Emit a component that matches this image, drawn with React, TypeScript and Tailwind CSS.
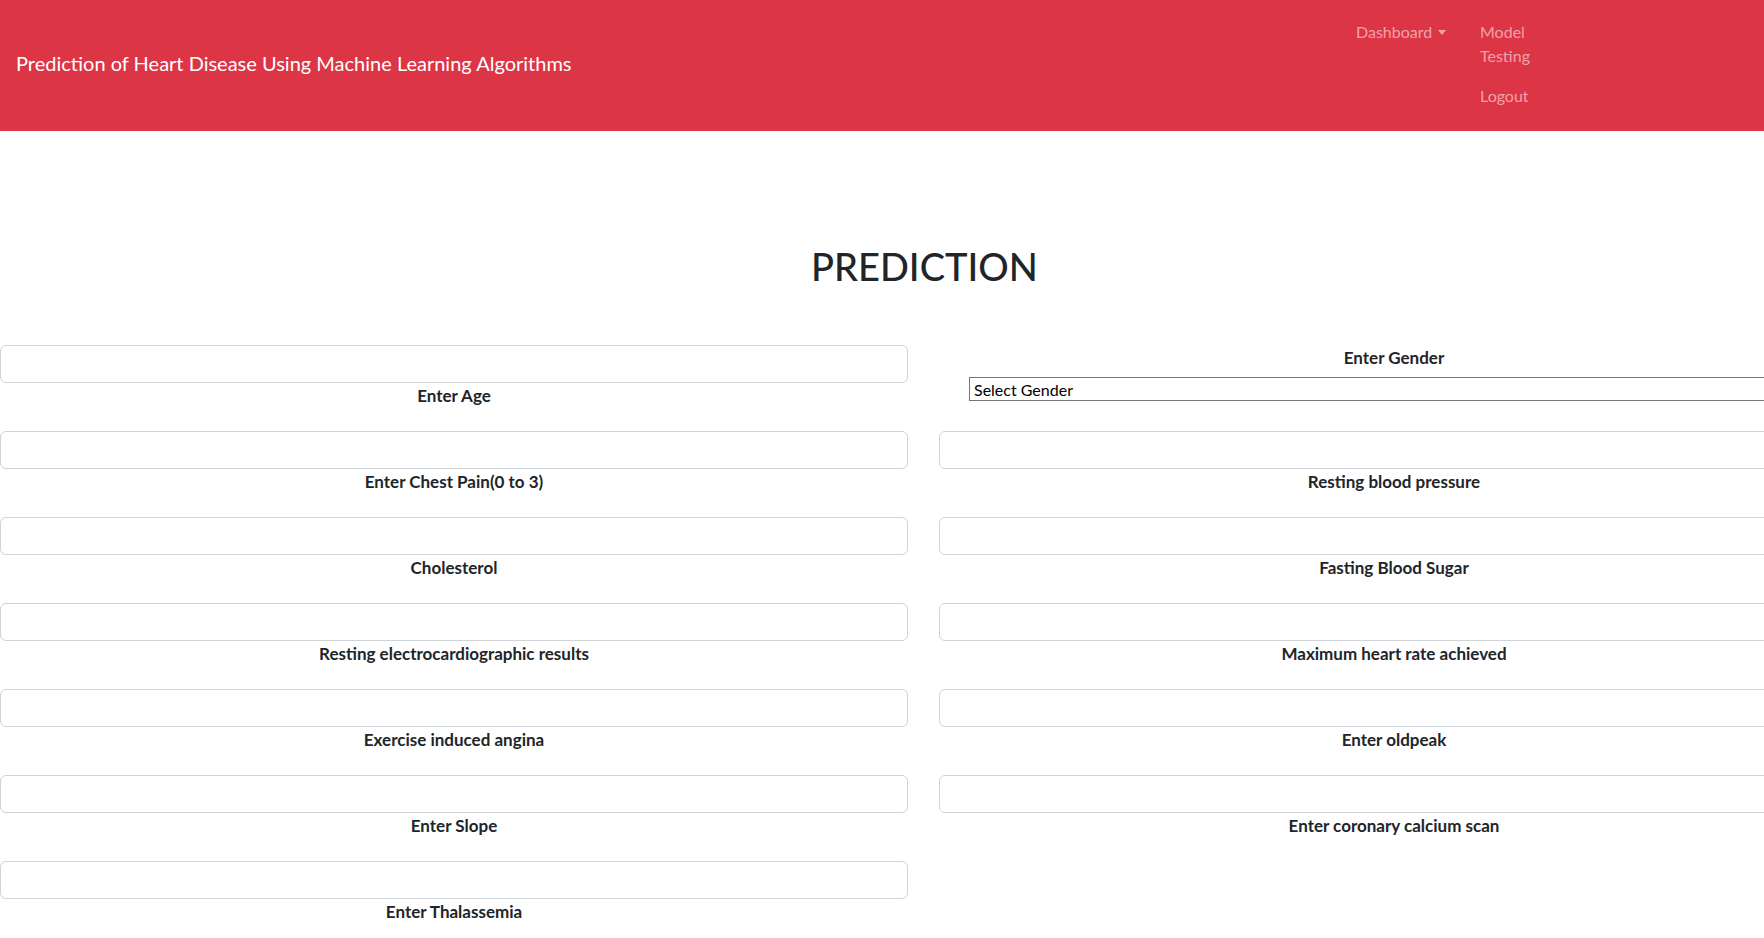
const pairs: [string, string | null][] = [
  ['Enter Age', 'Enter Gender'],
  ['Enter Chest Pain(0 to 3)', 'Resting blood pressure'],
  ['Cholesterol', 'Fasting Blood Sugar'],
  ['Resting electrocardiographic results', 'Maximum heart rate achieved'],
  ['Exercise induced angina', 'Enter oldpeak'],
  ['Enter Slope', 'Enter coronary calcium scan'],
  ['Enter Thalassemia', null],
];

const Field = ({ label }: { label: string }) => (
  <div>
    <input
      type="text"
      className="block h-[38px] w-full rounded-[6px] border border-[#ced4da] bg-white"
    />
    <label className="block pt-px text-center text-[17px] font-bold leading-6 text-[#212529]">{label}</label>
  </div>
);

const GenderField = () => (
  <div>
    <label className="block pt-px text-center text-[17px] font-bold leading-6 text-[#212529]">Enter Gender</label>
    <select className="mt-[7px] ml-[30px] block h-[24px] w-[850px] border border-[#767676] pl-0 text-black">
      <option>Select Gender</option>
      <option>Male</option>
      <option>Female</option>
    </select>
  </div>
);

const App = () => {
  return (
    <div className="h-screen overflow-hidden bg-white font-['Lato',sans-serif] text-base text-[#212529]">
      <header className="flex h-[131px] w-full items-center bg-[#dc3545] pl-4">
        <span className="mb-[5px] text-[20px] text-white">Prediction of Heart Disease Using Machine Learning Algorithms</span>
        <nav className="mr-[224px] ml-auto flex gap-[30px] self-start pt-[20px] leading-6 text-[rgba(255,255,255,0.55)]">
          <a className="flex w-[94px] items-start">
            Dashboard
            <span className="mt-[10px] ml-[6px] inline-block h-0 w-0 border-x-[4.8px] border-t-[5px] border-x-transparent border-t-[rgba(255,255,255,0.55)]" />
          </a>
          <div className="flex w-[60px] flex-col gap-4">
            <a>Model Testing</a>
            <a>Logout</a>
          </div>
        </nav>
      </header>
      <main className="w-[1849px]">
        <h1 className="mt-[111px] mb-[55px] text-center text-[38px] font-medium leading-[48px]">PREDICTION</h1>
        <form className="grid grid-cols-[908px_910px] gap-x-[31px] gap-y-[23px]">
          {pairs.map(([left, right]) => (
            <div key={left} className="contents">
              <Field label={left} />
              {right === 'Enter Gender' ? <GenderField /> : right ? <Field label={right} /> : <div />}
            </div>
          ))}
        </form>
      </main>
    </div>
  );
};

export default App;
